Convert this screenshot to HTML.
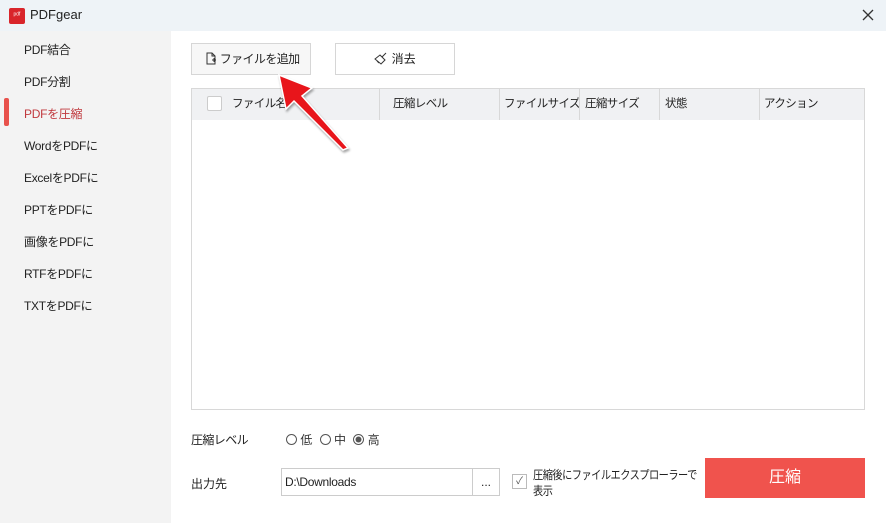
<!DOCTYPE html>
<html><head><meta charset="utf-8"><style>
*{margin:0;padding:0;box-sizing:border-box}
body{width:886px;height:523px;overflow:hidden;background:#eef2f5;font-family:"Liberation Sans","Noto Sans CJK JP",sans-serif;font-size:12px;color:#222;position:relative}
.abs{position:absolute}
.side div{position:absolute;left:24px;font-size:12px;color:#222;letter-spacing:-0.3px}
.th{position:absolute;top:88px;height:32px;line-height:32px;font-size:11.5px;color:#222;letter-spacing:-0.6px}
.sep{position:absolute;top:88px;width:1px;height:32px;background:#d8d8d8}
.n{letter-spacing:-0.6px}
</style></head><body>
<div class="abs" style="left:0;top:0;width:886px;height:31px;background:#eef3f7"></div>
<div class="abs" style="left:9px;top:8px;width:16px;height:16px;background:#d9252b;border-radius:2px;color:#fff;font-size:7px;line-height:16px;text-align:center">ᵖᵈᶠ</div>
<div class="abs" style="left:30px;top:7px;font-size:13px">PDFgear</div>
<svg class="abs" style="left:862px;top:9px" width="12" height="12"><path d="M1 1L11 11M11 1L1 11" stroke="#333" stroke-width="1.3"/></svg>
<div class="abs" style="left:0;top:31px;width:171px;height:492px;background:#f3f3f3"></div>
<div class="abs" style="left:171px;top:31px;width:715px;height:492px;background:#fff"></div>
<div class="abs" style="left:4px;top:98px;width:5px;height:28px;background:#e8524c;border-radius:2px"></div>
<div class="side">
<div style="top:41px">PDF結合</div>
<div style="top:73px">PDF分割</div>
<div style="top:105px;color:#c0393e">PDFを圧縮</div>
<div style="top:137px">WordをPDFに</div>
<div style="top:169px">ExcelをPDFに</div>
<div style="top:201px">PPTをPDFに</div>
<div style="top:233px">画像をPDFに</div>
<div style="top:265px">RTFをPDFに</div>
<div style="top:297px">TXTをPDFに</div>
</div>
<div class="abs n" style="left:191px;top:43px;width:120px;height:32px;border:1px solid #d6d6d6;background:#f7f7f7;line-height:30px;padding-left:13px">
<svg width="12" height="13" style="vertical-align:-2px" viewBox="0 0 12 13"><path d="M7 1H2v11h8V4z M7 1v3h3" fill="none" stroke="#333"/><path d="M7 8h4M9 6v4" stroke="#333"/></svg> ファイルを追加</div>
<div class="abs" style="left:335px;top:43px;width:120px;height:32px;border:1px solid #d6d6d6;background:#fff;line-height:30px;text-align:center">
<svg width="14" height="13" style="vertical-align:-2px" viewBox="0 0 14 13"><path d="M1 7l5-4 5 5-4 4z M8 5l4-4 M3 9l2 2" fill="none" stroke="#333"/></svg> 消去</div>
<div class="abs" style="left:191px;top:88px;width:674px;height:322px;border:1px solid #d8d8d8"></div>
<div class="abs" style="left:192px;top:89px;width:672px;height:31px;background:#f0f1f3"></div>
<div class="abs" style="left:207px;top:96px;width:15px;height:15px;border:1px solid #ccc;background:#fff;border-radius:2px"></div>
<div class="th" style="left:232px">ファイル名</div>
<div class="sep" style="left:379px"></div><div class="th" style="left:393px">圧縮レベル</div>
<div class="sep" style="left:499px"></div><div class="th" style="left:504px">ファイルサイズ</div>
<div class="sep" style="left:579px"></div><div class="th" style="left:585px">圧縮サイズ</div>
<div class="sep" style="left:659px"></div><div class="th" style="left:665px">状態</div>
<div class="sep" style="left:759px"></div><div class="th" style="left:764px">アクション</div>
<svg class="abs" style="left:270px;top:68px;overflow:visible" width="90" height="90">
<polygon points="9,7 42,20 32,28 78,80 73,82 24,33 16,41" fill="#e8151b" stroke="#fff" stroke-width="1.5" style="filter:drop-shadow(1px 2px 1px rgba(0,0,0,.35))"/></svg>
<div class="abs n" style="left:191px;top:431px">圧縮レベル</div>
<div class="abs" style="left:286px;top:431px;color:#333">
<svg width="11" height="11" style="vertical-align:-1px"><circle cx="5.5" cy="5.5" r="5" fill="none" stroke="#555"/></svg> 低 
<svg width="11" height="11" style="vertical-align:-1px;margin-left:4px"><circle cx="5.5" cy="5.5" r="5" fill="none" stroke="#555"/></svg> 中 
<svg width="11" height="11" style="vertical-align:-1px;margin-left:4px"><circle cx="5.5" cy="5.5" r="5" fill="none" stroke="#555"/><circle cx="5.5" cy="5.5" r="3" fill="#555"/></svg> 高</div>
<div class="abs" style="left:191px;top:475px">出力先</div>
<div class="abs" style="left:281px;top:468px;width:192px;height:28px;border:1px solid #ccc;line-height:26px;padding-left:3px;letter-spacing:-0.3px">D:\Downloads</div>
<div class="abs" style="left:472px;top:468px;width:28px;height:28px;border:1px solid #ccc;line-height:26px;text-align:center">...</div>
<div class="abs" style="left:512px;top:474px;width:15px;height:15px;border:1px solid #bbb;font-size:10px;text-align:center;line-height:13px;color:#555">✓</div>
<div class="abs" style="left:533px;top:467px;line-height:16px;font-size:12px;letter-spacing:-0.6px;white-space:nowrap;transform:scaleX(0.85);transform-origin:left">圧縮後にファイルエクスプローラーで<br>表示</div>
<div class="abs" style="left:705px;top:458px;width:160px;height:40px;background:#f0534d;color:#fff;font-size:16px;text-align:center;line-height:40px">圧縮</div>
</body></html>
